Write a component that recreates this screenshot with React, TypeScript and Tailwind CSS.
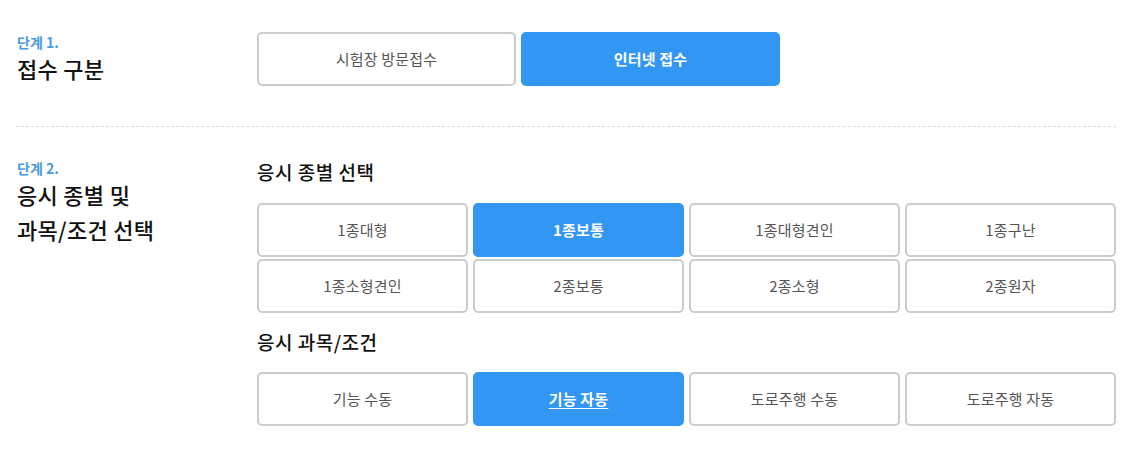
import React from "react";

const font = { fontFamily: '"Noto Sans CJK KR", "Noto Sans", sans-serif' };

function Btn({ label, active, underline, w }: { label: string; active?: boolean; underline?: boolean; w?: string }) {
  return (
    <button
      className={
        "h-[54px] rounded-[5px] border-2 text-[15px] tracking-[0.2px] flex items-center justify-center " +
        (w ? w + " " : "") +
        (active
          ? "bg-[#3197f3] border-[#3197f3] text-white font-bold"
          : "bg-white border-[#cccccc] text-[#555555]")
      }
    >
      <span className={underline ? "underline underline-offset-[3px]" : ""}>{label}</span>
    </button>
  );
}

function StepLabel({ step, lines }: { step: string; lines: string[] }) {
  return (
    <div className="w-[241px] shrink-0 pl-[1px]">
      <div className="text-[14px] leading-[18px] font-bold text-[#4a9be2]">{step}</div>
      <div className="text-[22px] leading-[35px] font-medium text-[#111111] tracking-[0.3px]">
        {lines.map((l) => (
          <div key={l}>{l}</div>
        ))}
      </div>
    </div>
  );
}

export default function App() {
  const types = ["1종대형", "1종보통", "1종대형견인", "1종구난", "1종소형견인", "2종보통", "2종소형", "2종원자"];
  const subjects = ["기능 수동", "기능 자동", "도로주행 수동", "도로주행 자동"];
  return (
    <div className="bg-white min-h-[449px] pl-[16px]" style={font}>
      <div className="w-[1100px]">
        <div className="flex pt-[32px] pb-[40px] border-b border-dashed border-[#dddddd]">
          <div className="w-[241px] shrink-0 pl-[1px] pt-[1px]">
            <div className="text-[14px] leading-[18px] font-bold text-[#4a9be2]">단계 1.</div>
            <div className="text-[22px] leading-[35px] font-medium text-[#111111] tracking-[0.3px]">접수 구분</div>
          </div>
          <div className="flex gap-[5px]">
            <Btn label="시험장 방문접수" w="w-[259px]" />
            <Btn label="인터넷 접수" w="w-[259px]" active />
          </div>
        </div>
        <div className="flex pt-[32px]">
          <StepLabel step="단계 2." lines={["응시 종별 및", "과목/조건 선택"]} />
          <div className="w-[859px]">
            <div className="text-[19px] leading-[26px] font-medium tracking-[0.5px] text-[#111111]">응시 종별 선택</div>
            <div className="mt-[18px] grid grid-cols-4 gap-x-[5px] gap-y-[2px]">
              {types.map((t) => (
                <Btn key={t} label={t} active={t === "1종보통"} />
              ))}
            </div>
            <div className="mt-[16px] text-[19px] leading-[26px] font-medium tracking-[0.5px] text-[#111111]">응시 과목/조건</div>
            <div className="mt-[17px] grid grid-cols-4 gap-x-[5px]">
              {subjects.map((t) => (
                <Btn key={t} label={t} active={t === "기능 자동"} underline={t === "기능 자동"} />
              ))}
            </div>
          </div>
        </div>
      </div>
    </div>
  );
}
